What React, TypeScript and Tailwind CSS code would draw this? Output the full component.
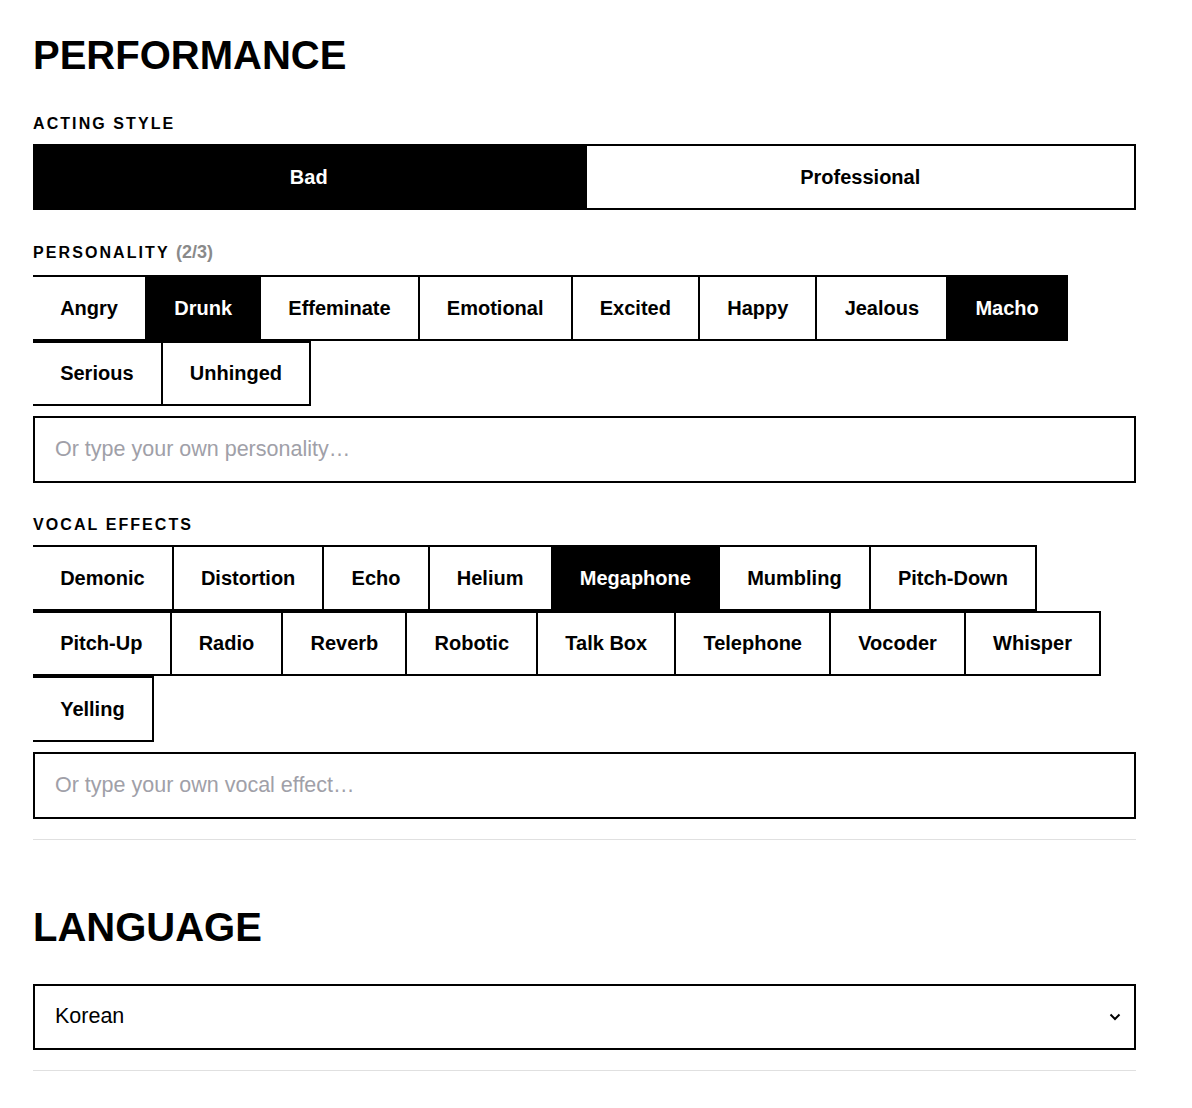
import { useState } from "react";

const personalities = [
  "Angry",
  "Drunk",
  "Effeminate",
  "Emotional",
  "Excited",
  "Happy",
  "Jealous",
  "Macho",
  "Serious",
  "Unhinged",
];

const vocalEffects = [
  "Demonic",
  "Distortion",
  "Echo",
  "Helium",
  "Megaphone",
  "Mumbling",
  "Pitch-Down",
  "Pitch-Up",
  "Radio",
  "Reverb",
  "Robotic",
  "Talk Box",
  "Telephone",
  "Vocoder",
  "Whisper",
  "Yelling",
];

function Chip({ label, active, onClick }: { label: string; active: boolean; onClick: () => void }) {
  return (
    <button
      onClick={onClick}
      className={
        active
          ? "h-[65.5px] px-[27.15px] border-y-2 border-r-2 border-black bg-black text-white text-[20px] font-bold"
          : "h-[65.5px] px-[27.15px] border-y-2 border-r-2 border-black bg-white text-black text-[20px] font-bold"
      }
    >
      {label}
    </button>
  );
}

function Label({ children }: { children: React.ReactNode }) {
  return (
    <h3 className="h-[24px] text-[16px] leading-[24px] font-bold tracking-[0.13em] text-black uppercase">
      {children}
    </h3>
  );
}

export default function App() {
  const [style, setStyle] = useState("Bad");
  const [picked, setPicked] = useState<string[]>(["Drunk", "Macho"]);
  const [effects, setEffects] = useState<string[]>(["Megaphone"]);

  const toggle = (list: string[], set: (v: string[]) => void, item: string) => {
    set(list.includes(item) ? list.filter((x) => x !== item) : [...list, item]);
  };

  return (
    <div className="bg-white px-[33px] pt-[35px] pb-[37px] font-['Liberation_Sans',Arial,sans-serif] text-black">
      <div className="w-[1103px]">
        <h2 className="text-[40px] leading-[40px] font-bold">PERFORMANCE</h2>

        <div className="mt-[37px]">
          <Label>Acting Style</Label>
          <div className="mt-[8px] flex">
            {["Bad", "Professional"].map((s) => (
              <button
                key={s}
                onClick={() => setStyle(s)}
                className={
                  style === s
                    ? "flex-1 h-[66px] border-2 border-black bg-black text-white text-[20px] font-bold"
                    : "flex-1 h-[66px] border-2 border-black bg-white text-black text-[20px] font-bold"
                }
              >
                {s}
              </button>
            ))}
          </div>
        </div>

        <div className="mt-[31px]">
          <Label>
            Personality{" "}
            <span className="text-[18px] leading-none tracking-normal text-[#8a8a8a]">(2/3)</span>
          </Label>
          <div className="mt-[10px] flex flex-wrap">
            {personalities.map((p) => (
              <Chip key={p} label={p} active={picked.includes(p)} onClick={() => toggle(picked, setPicked, p)} />
            ))}
          </div>
          <input
            placeholder="Or type your own personality…"
            className="mt-[10px] block w-full h-[67px] border-2 border-black px-[20px] text-[21.5px] outline-none placeholder:text-[#a0a0a8]"
          />
        </div>

        <div className="mt-[30px]">
          <Label>Vocal Effects</Label>
          <div className="mt-[8px] flex flex-wrap">
            {vocalEffects.map((v) => (
              <Chip key={v} label={v} active={effects.includes(v)} onClick={() => toggle(effects, setEffects, v)} />
            ))}
          </div>
          <input
            placeholder="Or type your own vocal effect…"
            className="mt-[10px] block w-full h-[67px] border-2 border-black px-[20px] text-[21.5px] outline-none placeholder:text-[#a0a0a8]"
          />
        </div>

        <div className="mt-[20px] border-t border-[#e0e0e0]" />

        <h2 className="mt-[67px] text-[40px] leading-[40px] font-bold">LANGUAGE</h2>

        <div className="mt-[37px] flex h-[66px] items-center justify-between border-2 border-black pl-[20px] pr-[13px]">
          <span className="text-[21.5px]">Korean</span>
          <svg width="12" height="8" viewBox="0 0 12 8" fill="none">
            <path d="M1.5 1.5 6 6l4.5-4.5" stroke="#000" strokeWidth="2" />
          </svg>
        </div>

        <div className="mt-[20px] border-t border-[#e0e0e0]" />
      </div>
    </div>
  );
}
